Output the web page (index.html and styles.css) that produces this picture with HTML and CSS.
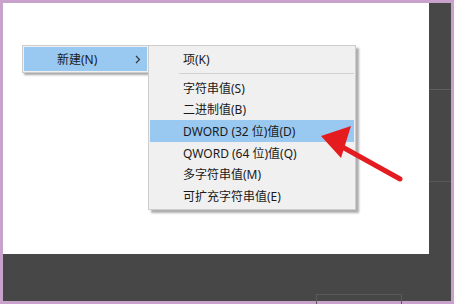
FILE: index.html
```html
<!DOCTYPE html>
<html lang="zh-CN">
<head>
<meta charset="utf-8">
<link rel="stylesheet" href="styles.css">
</head>
<body>
<div class="frame">
  <div class="screen">
    <div class="canvas">
      <div class="submenu">
        <div class="item hl sub">
          <span>新建(N)</span>
          <svg class="chev" width="6" height="9" viewBox="0 0 6 9"><polyline points="1,1 4.5,4.5 1,8" fill="none" stroke="#333" stroke-width="1.1"/></svg>
        </div>
      </div>
      <div class="menu">
        <div class="item">项(K)</div>
        <div class="sep"></div>
        <div class="item">字符串值(S)</div>
        <div class="item">二进制值(B)</div>
        <div class="item hl">DWORD (32 位)值(D)</div>
        <div class="item">QWORD (64 位)值(Q)</div>
        <div class="item">多字符串值(M)</div>
        <div class="item">可扩充字符串值(E)</div>
      </div>
      <svg class="arrow" width="426" height="251" viewBox="0 0 426 251">
        <line x1="397" y1="176" x2="334" y2="141" stroke="#e51c1f" stroke-width="5" stroke-linecap="round"/>
        <polygon points="318,133 348,123 338,155" fill="#e51c1f"/>
      </svg>
    </div>
    <div class="side">
      <div class="seg1"></div>
      <div class="seg2"></div>
    </div>
    <div class="bottom">
      <div class="box"></div>
    </div>
  </div>
</div>
</body>
</html>
```
FILE: styles.css
```css
html, body {
  margin: 0;
  padding: 0;
}
body {
  width: 454px;
  height: 304px;
  overflow: hidden;
  font-family: "Noto Sans", "Noto Sans CJK SC", sans-serif;
}
.frame {
  width: 454px;
  height: 304px;
  box-sizing: border-box;
  padding: 3px 3px 3px 3px;
  background: #c9a2cb;
}
.screen {
  width: 100%;
  height: 100%;
  display: grid;
  grid-template-columns: 426px 1fr;
  grid-template-rows: 251px 1fr;
  background: #474747;
}
.canvas {
  background: #ffffff;
  position: relative;
}
.side {
  display: flex;
  flex-direction: column;
}
.seg1 {
  height: 86px;
  border-bottom: 1px solid #5e5e5e;
}
.seg2 {
  height: 91px;
  border-bottom: 1px solid #585858;
}
.bottom {
  grid-column: 1 / 3;
  grid-row: 2;
  display: flex;
}
.box {
  margin-left: 313px;
  margin-top: 40px;
  width: 84px;
  height: 10px;
  border: 1px solid #5a5a5a;
  border-bottom: none;
}
.submenu, .menu {
  position: absolute;
  background: #f0f0f0;
  border: 1px solid #cdcdcd;
  box-sizing: border-box;
  box-shadow: 2px 2px 2px rgba(0, 0, 0, 0.35);
}
.submenu {
  left: 19px;
  top: 42px;
  width: 127px;
  height: 28px;
  padding: 1px;
}
.menu {
  left: 145px;
  top: 42px;
  width: 208px;
  height: 165px;
  padding: 1px 1px 2px 1px;
  box-shadow: 3px 3px 2px rgba(0, 0, 0, 0.32);
}
.item {
  height: 21.6px;
  display: flex;
  align-items: center;
  padding-left: 33px;
  font-size: 12px;
  color: #1a1a1a;
  white-space: nowrap;
}
.menu .item:first-child {
  height: 23px;
}
.item.hl {
  background: #99c9f1;
}
.item.sub {
  height: 24px;
  justify-content: space-between;
  padding-right: 6px;
}
.chev {
  display: block;
}
.sep {
  height: 7px;
  display: flex;
  align-items: center;
  margin-left: 29px;
}
.sep::after {
  content: "";
  display: block;
  width: 100%;
  height: 1px;
  background: #d2d2d2;
}
.arrow {
  position: absolute;
  left: 0;
  top: 0;
  pointer-events: none;
}
```
